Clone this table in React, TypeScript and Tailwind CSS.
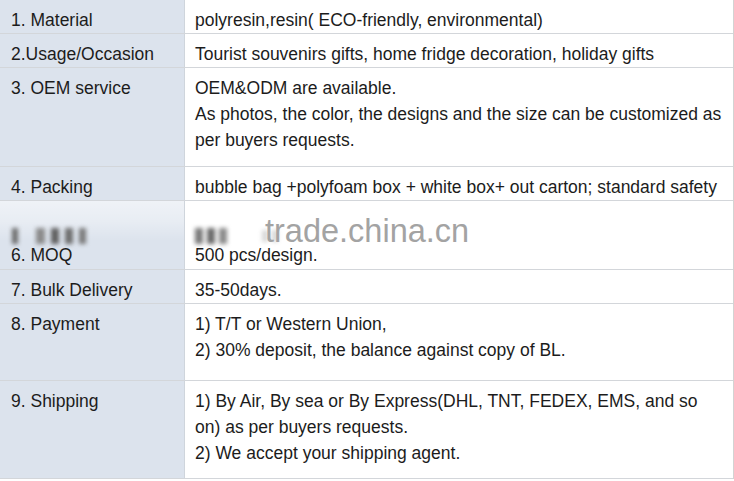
import React from "react";

type Row = { label: string; lines: string[]; h: string; hidden?: boolean };

const rows: Row[] = [
  { label: "1. Material", lines: ["polyresin,resin( ECO-friendly, environmental)"], h: "h-[34px]" },
  { label: "2.Usage/Occasion", lines: ["Tourist souvenirs gifts, home fridge decoration, holiday gifts"], h: "h-[34px]" },
  {
    label: "3. OEM service",
    lines: [
      "OEM&ODM are available.",
      "As photos, the color, the designs and the size can be customized as",
      "per buyers requests.",
    ],
    h: "h-[99px]",
  },
  { label: "4. Packing", lines: ["bubble bag +polyfoam box + white box+ out carton; standard safety"], h: "h-[34px]" },
  { label: "", lines: [], h: "h-[34px]", hidden: true },
  { label: "6. MOQ", lines: ["500 pcs/design."], h: "h-[35px]" },
  { label: "7. Bulk Delivery", lines: ["35-50days."], h: "h-[34px]" },
  {
    label: "8. Payment",
    lines: ["1) T/T or Western Union,", "2) 30% deposit, the balance against copy of BL."],
    h: "h-[77px]",
  },
  {
    label: "9. Shipping",
    lines: [
      "1) By Air, By sea or By Express(DHL, TNT, FEDEX, EMS, and so",
      "on) as per buyers requests.",
      "2) We accept your shipping agent.",
    ],
    h: "h-[98px]",
  },
];

export default function App() {
  return (
    <div className="relative w-[734px] h-[481px] bg-white overflow-hidden font-['Liberation_Sans',Arial,sans-serif] text-[17.5px] leading-[26px] text-[#1c1c1c]">
      <div className="w-[734px] border-r border-[#d3d3d3]">
        {rows.map((r, i) => (
          <div
            key={i}
            className={`flex ${r.h} ${r.hidden ? "" : "border-b border-[#d3d6da]"}`}
          >
            <div className="w-[185px] shrink-0 bg-[#dce3ed] border-r border-[#cfd5dc] pl-[11px] pt-[7px] whitespace-nowrap">
              {r.label}
            </div>
            <div className="flex-1 pl-[10px] pt-[7px] whitespace-nowrap">
              {r.lines.map((l, j) => (
                <div key={j}>{l}</div>
              ))}
            </div>
          </div>
        ))}
      </div>

      {/* watermark haze over row 5 */}
      <div className="absolute left-0 top-[201px] w-[184px] h-[40px] bg-gradient-to-b from-white/55 via-white/35 to-white/0" />
      <div className="absolute left-[12px] top-[228px] flex gap-[6px] blur-[2px]">
        <div className="w-[6px] h-[16px] bg-[#6b6b6b]" />
        <div className="w-[9px] h-[16px] bg-[#8a8a8a] ml-[12px]" />
        <div className="w-[8px] h-[16px] bg-[#5f5f5f]" />
        <div className="w-[8px] h-[16px] bg-[#6e6e6e]" />
        <div className="w-[7px] h-[16px] bg-[#7a7a7a]" />
      </div>
      <div className="absolute left-[195px] top-[228px] flex gap-[4px] blur-[2px]">
        <div className="w-[8px] h-[16px] bg-[#7a7a7a]" />
        <div className="w-[8px] h-[16px] bg-[#6a6a6a]" />
        <div className="w-[8px] h-[16px] bg-[#8a8a8a]" />
      </div>
      <div className="absolute left-[262px] top-[230px] flex gap-[4px] blur-[2px] opacity-40">
        <div className="w-[6px] h-[12px] bg-[#9a9a9a]" />
        <div className="w-[6px] h-[12px] bg-[#9a9a9a]" />
      </div>
      <div className="absolute left-[265px] top-[211px] text-[32.5px] leading-[40px] text-[#a3a3a3]">
        trade.china.cn
      </div>
    </div>
  );
}
